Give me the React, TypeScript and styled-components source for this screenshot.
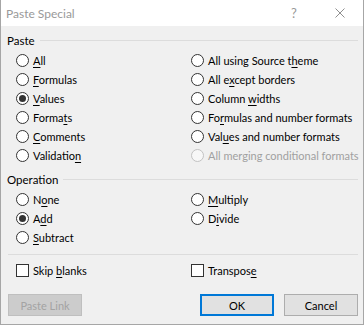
import React from 'react'
import styled, { createGlobalStyle } from 'styled-components'

const GlobalStyle = createGlobalStyle`
  html, body {
    margin: 0;
    padding: 0;
    background: #ffffff;
  }
  * {
    box-sizing: border-box;
  }
`

const FONT = `Lato, "Segoe UI", Arial, sans-serif`

interface Option {
  label: React.ReactNode
  checked?: boolean
  disabled?: boolean
}

const pasteLeft: Option[] = [
  { label: <><u>A</u>ll</> },
  { label: <><u>F</u>ormulas</> },
  { label: <><u>V</u>alues</>, checked: true },
  { label: <>Forma<u>t</u>s</> },
  { label: <><u>C</u>omments</> },
  { label: <>Validatio<u>n</u></> },
]

const pasteRight: Option[] = [
  { label: <>All using Source t<u>h</u>eme</> },
  { label: <>All e<u>x</u>cept borders</> },
  { label: <>Column <u>w</u>idths</> },
  { label: <>Fo<u>r</u>mulas and number formats</> },
  { label: <>Val<u>u</u>es and number formats</> },
  { label: <>All merging conditional formats</>, disabled: true },
]

const opLeft: Option[] = [
  { label: <>N<u>o</u>ne</> },
  { label: <>A<u>d</u>d</>, checked: true },
  { label: <><u>S</u>ubtract</> },
]

const opRight: Option[] = [
  { label: <><u>M</u>ultiply</> },
  { label: <>D<u>i</u>vide</> },
]

export default function App() {
  return (
    <>
      <GlobalStyle />
      <Window>
        <TitleBar>
          <Title>Paste Special</Title>
          <TitleButtons>
            <HelpButton>?</HelpButton>
            <CloseButton>
              <svg width="10" height="10" viewBox="0 0 10 10">
                <path d="M0.5 0.5 L9.5 9.5 M9.5 0.5 L0.5 9.5" stroke="#8f8f8f" strokeWidth="1" fill="none" />
              </svg>
            </CloseButton>
          </TitleButtons>
        </TitleBar>
        <Body>
          <GroupHeader>
            <GroupLabel>Paste</GroupLabel>
            <GroupLine />
          </GroupHeader>
          <OptionGrid>
            <Column>
              {pasteLeft.map((o, i) => (
                <RadioRow key={i} option={o} />
              ))}
            </Column>
            <Column>
              {pasteRight.map((o, i) => (
                <RadioRow key={i} option={o} />
              ))}
            </Column>
          </OptionGrid>

          <GroupHeader $spaced>
            <GroupLabel>Operation</GroupLabel>
            <GroupLine />
          </GroupHeader>
          <OptionGrid>
            <Column>
              {opLeft.map((o, i) => (
                <RadioRow key={i} option={o} />
              ))}
            </Column>
            <Column>
              {opRight.map((o, i) => (
                <RadioRow key={i} option={o} />
              ))}
            </Column>
          </OptionGrid>

          <Separator />

          <OptionGrid $checks>
            <Row>
              <CheckBox />
              <Label>Skip <u>b</u>lanks</Label>
            </Row>
            <Row>
              <CheckBox />
              <Label>Transpos<u>e</u></Label>
            </Row>
          </OptionGrid>

          <ButtonBar>
            <Button $disabled>Paste Link</Button>
            <ButtonGroup>
              <Button $default>OK</Button>
              <Button>Cancel</Button>
            </ButtonGroup>
          </ButtonBar>
        </Body>
      </Window>
    </>
  )
}

function RadioRow({ option }: { option: Option }) {
  return (
    <Row>
      <Radio $disabled={option.disabled}>{option.checked && <Dot />}</Radio>
      <Label $disabled={option.disabled}>{option.label}</Label>
    </Row>
  )
}

const Window = styled.div`
  width: 364px;
  height: 325px;
  display: flex;
  flex-direction: column;
  border: 1px solid #a6a6a6;
  border-top: none;
  background: #f0f0f0;
  font-family: ${FONT};
  font-size: 11px;
  color: #000;
`

const TitleBar = styled.div`
  height: 26px;
  flex-shrink: 0;
  background: #ffffff;
  display: flex;
  align-items: center;
  justify-content: space-between;
  padding-left: 5px;
`

const Title = styled.div`
  font-size: 12px;
  color: #999999;
`

const TitleButtons = styled.div`
  display: flex;
  align-items: center;
  height: 100%;
`

const HelpButton = styled.div`
  width: 46px;
  text-align: center;
  font-size: 13px;
  color: #999999;
`

const CloseButton = styled.div`
  width: 46px;
  height: 100%;
  display: flex;
  align-items: center;
  justify-content: center;
`

const Body = styled.div`
  flex: 1;
  display: flex;
  flex-direction: column;
  padding: 6px 5px 0 6px;
`

const GroupHeader = styled.div<{ $spaced?: boolean }>`
  height: 16px;
  display: flex;
  align-items: center;
  margin-top: ${(p) => (p.$spaced ? '6px' : '0')};
`

const GroupLabel = styled.span`
  font-size: 11.5px;
  padding-right: 5px;
`

const GroupLine = styled.div`
  flex: 1;
  height: 1px;
  background: #dcdcdc;
`

const OptionGrid = styled.div<{ $checks?: boolean }>`
  display: grid;
  grid-template-columns: 175px 1fr;
  padding-left: 9px;
  margin-top: ${(p) => (p.$checks ? '6px' : '3px')};
`

const Column = styled.div`
  display: flex;
  flex-direction: column;
`

const Row = styled.div`
  height: 19px;
  display: flex;
  align-items: center;
  gap: 4px;
`

const Radio = styled.span<{ $disabled?: boolean }>`
  width: 13px;
  height: 13px;
  border-radius: 50%;
  border: 1px solid ${(p) => (p.$disabled ? '#c2c2c2' : '#333333')};
  background: ${(p) => (p.$disabled ? '#f7f7f7' : '#ffffff')};
  display: flex;
  align-items: center;
  justify-content: center;
  flex-shrink: 0;
`

const Dot = styled.span`
  width: 7px;
  height: 7px;
  border-radius: 50%;
  background: #333333;
`

const CheckBox = styled.span`
  width: 13px;
  height: 13px;
  border: 1px solid #333333;
  background: #ffffff;
  flex-shrink: 0;
`

const Label = styled.span<{ $disabled?: boolean }>`
  white-space: nowrap;
  color: ${(p) => (p.$disabled ? '#a0a0a0' : '#000000')};
  u {
    text-underline-offset: 2px;
  }
`

const Separator = styled.div`
  height: 1px;
  background: #dcdcdc;
  margin-top: 7px;
  margin-left: 1px;
`

const ButtonBar = styled.div`
  display: flex;
  justify-content: space-between;
  margin-top: 14px;
  padding-left: 1px;
`

const ButtonGroup = styled.div`
  display: flex;
  gap: 10px;
`

const Button = styled.div<{ $default?: boolean; $disabled?: boolean }>`
  width: 74px;
  height: 22px;
  display: flex;
  align-items: center;
  justify-content: center;
  background: ${(p) => (p.$disabled ? '#cccccc' : '#e1e1e1')};
  border: ${(p) => (p.$default ? '2px solid #0078d7' : p.$disabled ? '1px solid #bfbfbf' : '1px solid #adadad')};
  color: ${(p) => (p.$disabled ? '#a3a3a3' : '#000000')};
  font-size: 11px;
`
